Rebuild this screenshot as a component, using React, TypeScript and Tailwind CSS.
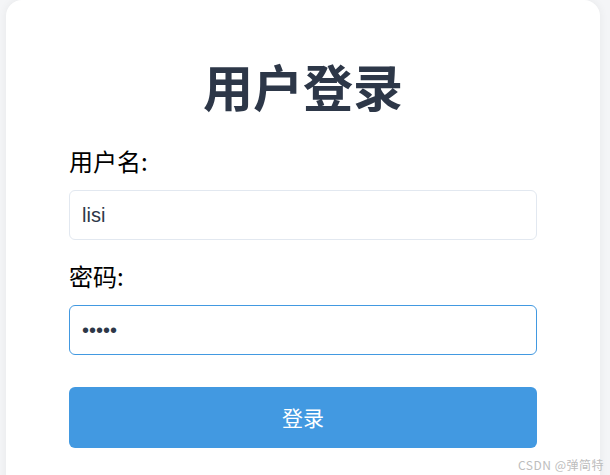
const LoginCard = () => {
  return (
    <div className="ml-[6px] w-[594px] min-h-[500px] rounded-2xl bg-white px-[63px] pt-[55px] shadow-[0_0_10px_rgba(0,0,0,0.06)]">
      <h1 className="mb-[30px] text-center text-[50px] font-bold leading-[60px] text-[#2d3748]">
        用户登录
      </h1>

      {/* Username */}
      <div className="mb-5">
        <label className="mb-[13px] block text-2xl leading-8 text-black">用户名:</label>
        <input
          type="text"
          defaultValue="lisi"
          className="block h-[50px] w-full rounded-md border border-[#e2e8f0] px-3 font-['Liberation_Sans','Noto_Sans_CJK_SC',sans-serif] text-xl text-[#2d3748] outline-none"
        />
      </div>

      {/* Password */}
      <div>
        <label className="mb-[13px] block text-2xl leading-8 text-black">密码:</label>
        <input
          type="password"
          defaultValue="12345"
          className="block h-[50px] w-full rounded-md border border-[#4299e1] px-3 font-['Liberation_Sans','Noto_Sans_CJK_SC',sans-serif] text-xl text-[#2d3748] outline-none"
        />
      </div>

      <button
        type="button"
        className="mt-8 block h-[61px] w-full rounded-md bg-[#4299e1] text-[21px] text-white"
      >
        登录
      </button>
    </div>
  );
};

export default function App() {
  return (
    <div className="relative h-[475px] w-[610px] overflow-hidden bg-[#f4f5f7] font-['Noto_Sans_CJK_SC','Noto_Sans',sans-serif]">
      <LoginCard />
      {/* Watermark */}
      <span className="absolute right-[6px] top-[457px] text-xs tracking-[0.5px] text-[#bdbdbd]">
        CSDN @弹简特
      </span>
    </div>
  );
}
